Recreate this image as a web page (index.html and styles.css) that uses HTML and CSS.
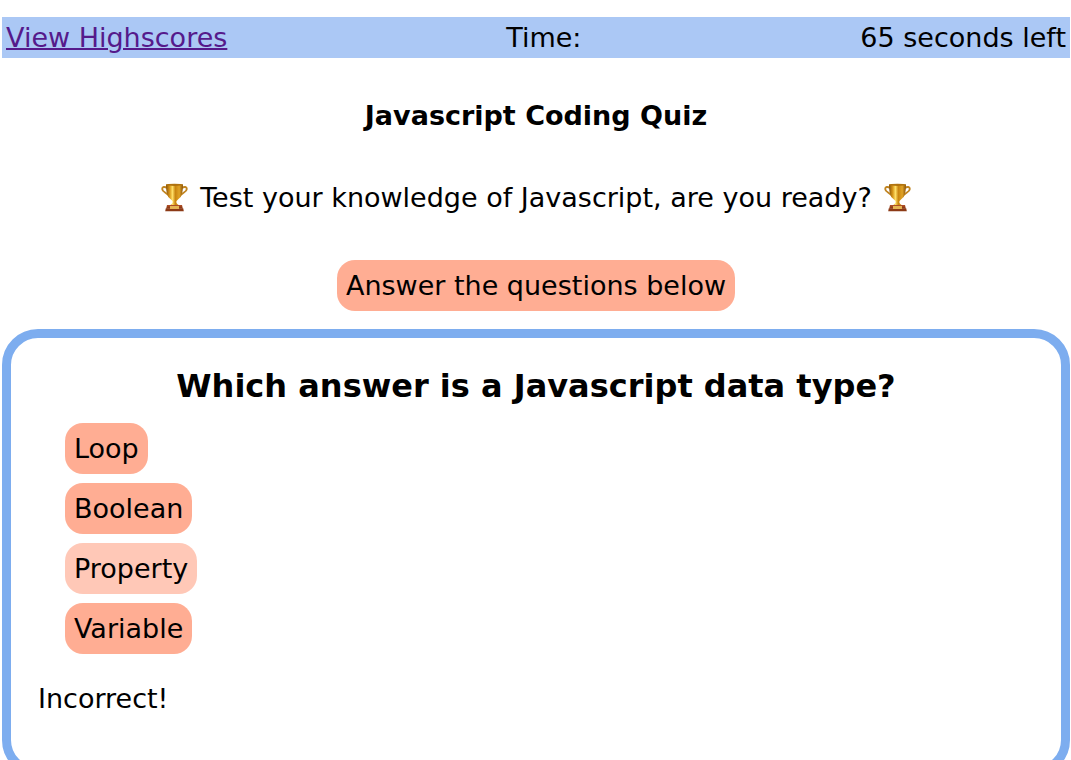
FILE: index.html
```html
<!DOCTYPE html>
<html lang="en">
<head>
  <meta charset="utf-8">
  <meta name="viewport" content="width=device-width, initial-scale=1">
  <title>Javascript Coding Quiz</title>
  <link rel="stylesheet" href="styles.css">
</head>
<body>
  <svg class="sprite" aria-hidden="true">
    <defs>
      <linearGradient id="gold" x1="0" x2="1" y1="0" y2="0">
        <stop offset="0" stop-color="#8a5206"/>
        <stop offset="0.22" stop-color="#d9981a"/>
        <stop offset="0.38" stop-color="#ffdf66"/>
        <stop offset="0.55" stop-color="#c9850f"/>
        <stop offset="0.78" stop-color="#e0a326"/>
        <stop offset="1" stop-color="#875008"/>
      </linearGradient>
      <linearGradient id="wood" x1="0" x2="0" y1="0" y2="1">
        <stop offset="0" stop-color="#b4532a"/>
        <stop offset="1" stop-color="#84330f"/>
      </linearGradient>
      <symbol id="trophy" viewBox="0 0 27 29">
        <path d="M6 5C3.500 3.200 1.200 3.800 1.200 6c0 3.600 5.600 3.600 7.600 8M21 5c2.500-1.800 4.800-1.200 4.800 1 0 3.600-5.600 3.600-7.600 8" fill="none" stroke="#c08420" stroke-width="1.900"/>
        <path d="M5 1.500h17c0 8-1.500 12.500-5.500 15.500-1.200 1-1.300 1.800-1 2.800.3 1.200 1.500 2 3.500 2.700H8c2-.7 3.200-1.500 3.500-2.700.3-1 .2-1.800-1-2.800C6.500 14 5 9.500 5 1.500Z" fill="url(#gold)"/>
        <ellipse cx="13.500" cy="1.800" rx="8.500" ry="1.100" fill="#b0730f"/>
        <path d="M6 22h15l.8 3.500H5.200Z" fill="url(#wood)"/>
        <path d="M4.800 25.200h17.400l.6 3H4.200Z" fill="#8c3a16"/>
        <path d="M9 23h9v3H9Z" fill="#e5b453"/>
      </symbol>
    </defs>
  </svg>

  <header class="topbar">
    <a class="scores" href="#highscores">View Highscores</a>
    <span>Time:</span>
    <span>65 seconds left</span>
  </header>

  <main>
    <section class="intro">
      <h1 class="title">Javascript Coding Quiz</h1>
      <p class="tagline">
        <svg class="trophy" aria-hidden="true"><use href="#trophy"/></svg>
        <span>Test your knowledge of Javascript, are you ready?</span>
        <svg class="trophy" aria-hidden="true"><use href="#trophy"/></svg>
      </p>
      <button class="pill" type="button">Answer the questions below</button>
    </section>

    <section class="quiz">
      <h2 class="question">Which answer is a Javascript data type?</h2>
      <div class="answers">
        <button class="pill" type="button">Loop</button>
        <button class="pill" type="button">Boolean</button>
        <button class="pill pill-active" type="button">Property</button>
        <button class="pill" type="button">Variable</button>
      </div>
      <p class="result">Incorrect!</p>
    </section>
  </main>
</body>
</html>
```
FILE: styles.css
```css
* {
  box-sizing: border-box;
}

body {
  margin: 17px 1px 0 2px;
  background: #fff;
  color: #000;
  font-family: Verdana, "DejaVu Sans", sans-serif;
  font-size: 27px;
  line-height: 33px;
}

h1,
h2,
p {
  margin: 0;
}

.sprite {
  position: absolute;
  width: 0;
  height: 0;
}

.topbar {
  display: flex;
  justify-content: space-between;
  padding: 4px;
  background: #abc8f5;
}

.scores {
  color: #551a8b;
  text-decoration-thickness: 2px;
}

.intro {
  display: flex;
  flex-direction: column;
  align-items: center;
  padding: 41px 0 18px;
}

.title {
  font-size: 27px;
  line-height: 33px;
}

.tagline {
  display: flex;
  align-items: center;
  gap: 12px;
  margin: 49px 0 46px;
}

.trophy {
  width: 27px;
  height: 29px;
}

.pill {
  padding: 9px;
  border: 0;
  border-radius: 18px;
  background: #ffad93;
  color: #000;
  font: inherit;
}

.pill-active {
  background: #ffc8b7;
}

.quiz {
  padding: 27px 27px 52px;
  border: 9px solid #7dadef;
  border-radius: 36px;
}

.question {
  font-size: 32px;
  line-height: 42px;
  text-align: center;
}

.answers {
  display: flex;
  flex-direction: column;
  align-items: flex-start;
  gap: 9px;
  padding: 16px 27px 28px;
}
```
